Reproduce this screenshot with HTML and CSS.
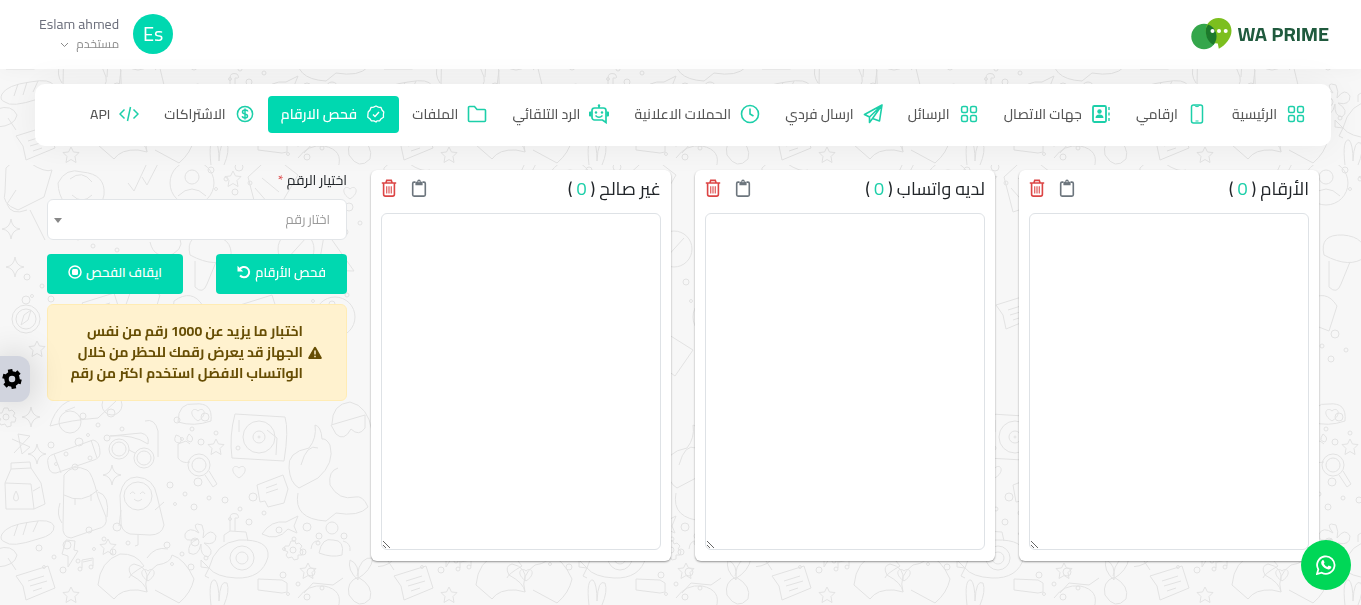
FILE: index.html
```html
<!DOCTYPE html>
<html lang="ar" dir="rtl">
<head>
  <meta charset="UTF-8" />
  <meta name="viewport" content="width=device-width, initial-scale=1.0"/>
  <title>WA PRIME - فحص الارقام</title>
  <link rel="stylesheet" href="styles.css">
</head>
<body>
  <!-- doodle wallpaper -->
  <svg class="wallpaper" aria-hidden="true">
    <defs>
      <path id="star" d="M0-8l2.5 5 5.5.5-4 4 1 6-5-3-5 3 1-6-4-4 5.500-.5z"/>
      <path id="spark" d="M0-10Q1-1 9 0 1 1 0 10-1 1-9 0-1-1 0-10z"/>
      <path id="heart" d="M0 6C-11-1-5-9 0-4 5-9 11-1 0 6z"/>
      <g id="dots">
        <circle cx="3" cy="5" r="3"/><circle cx="18" cy="14" r="2"/><circle cx="31" cy="2" r="4"/><circle cx="8" cy="24" r="1.500"/><circle cx="27" cy="27" r="3"/><circle cx="42" cy="18" r="2"/>
      </g>
      <g id="note"><path d="M0 8L32-2l7 22L10 32l-3-14zM12 13l16-5M14 18l17-5M17 23l9-3"/></g>
      <g id="gearline"><circle r="3"/><path d="M-2-9h4l1 3 3-1 3 3-2 3 3 2-1 4-4 0 0 4-4 1-2-3-4 1-2-3 2-3-4-2 1-4 4 0z"/></g>
      <pattern id="doodles" width="378" height="440" y="165" patternUnits="userSpaceOnUse">
        <!-- upper half -->
        <circle cx="192" cy="18" r="22"/><circle cx="192" cy="12" r="7"/><path d="M178 31q14-14 28 0"/>
        <path d="M58 18q8-16 24-11 24 2 22 23-4 19-24 15-21-3-22-27zM70 14q12-10 22 3M72 30q10 10 20 0"/>
        <path d="M6 3q8-10 24-5 15 10 22 7l-8 27-26 13q-17-6-13-18zM16 25l-9 14q4 12 20 6"/>
        <path d="M128 18l6 8 14-30M142 12l5 8 15-29"/>
        <path d="M248 12l24-22 26 20-17 29-24 8zM262 13l17 14M255 23l14 16"/>
        <use href="#star" x="233" y="14"/><use href="#heart" x="350" y="28"/><use href="#spark" x="11" y="64"/>
        <path d="M30 45l15 30M150 77q4 18 23 12 15-9 2-22M190 90q-5-21 19-20 24 2 22 22-15 12-41-2zM195 96v26q8 8 12-3l9-22"/>
        <circle cx="296" cy="84" r="18"/><path d="M287 94l19-21M325 65l-7 40 36 1z"/>
        <use href="#spark" x="15" y="102"/><circle cx="26" cy="154" r="14"/><circle cx="26" cy="154" r="10"/><circle cx="26" cy="135" r="4"/><path d="M21 160l3-10 7-5-3 10z"/>
        <use href="#note" x="82" y="130"/><path d="M135 114l25 16-11 37-27-16zM174 136q18-13 29 5l-8 25-23-9z"/>
        <use href="#star" x="37" y="184"/><use href="#note" x="240" y="132"/><circle cx="335" cy="152" r="20"/><circle cx="335" cy="152" r="8"/>
        <path d="M66 195l43 10M105 196q18-24 38-8 17-4 19 14l-54 3zM272 193l16-25 27 17-18 26z"/>
        <!-- lower half -->
        <use href="#gearline" x="6" y="252"/><use href="#spark" x="31" y="252"/>
        <path d="M50 261q8-28 34-28 21-6 32 3l-18 17q-27 2-48 8zM65 246l10-4"/><circle cx="70" cy="257" r="11"/><circle cx="112" cy="240" r="10"/>
        <path d="M12 274l18 8-8 7-4-20 12 2-16 17"/><use href="#spark" x="37" y="289"/>
        <path d="M48 299q-2-8 6-10l39-14q7 1 7 13 0 5-6 7l-38 13q-7 1-8-9zM54 289l7 19M91 275l6 18"/>
        <path d="M64 310q9-12 23-5 5 2 11 27l8 20q2 10-9 12l-26 9q-9-1-8-12zM64 330q18 10 34-5M60 338q-4 12 2 20M98 327q12 3 9 25M75 333v7M91 329v7"/>
        <path d="M5 318l6-14 20-1 10 15 4 21-11 5-28 0zM5 318l26 1 3 25M11 304v-6l19-1 1 6M16 326q-5 9 0 10 5-1 0-10M33 326l7-4"/>
        <circle cx="119" cy="284" r="10"/><circle cx="119" cy="284" r="7"/><circle cx="144" cy="293" r="10"/><circle cx="144" cy="293" r="7"/><path d="M110 271l31-3q9 2 7 11-15-10-38-8M145 256q10-3 13 10l0 26M129 285l6 3"/>
        <path d="M120 330q3-18 17-18 17 1 20 19l7 29q-2 10-14 10l-20-1q-10-3-9-14z"/><circle cx="138" cy="331" r="14"/><path d="M130 329q3-4 5 0M140 329q3-4 5 0M134 334q4 4 8 0M138 370v10l-3 1M155 345l9-8M121 345l-2 16"/>
        <use href="#spark" x="112" y="310"/>
        <path d="M178 293v-14l8-3 4 3M178 293q4 6 12 4"/><circle cx="199" cy="300" r="11"/><circle cx="199" cy="300" r="7"/><path d="M205 310l8 12 4-3-8-13M176 270q8 2 4 8-8 0-4-8M189 269q6 4 2 8-7-1-2-8"/>
        <path d="M178 257q0-20 17-18 18-2 16 17-17 6-33 1z"/><use href="#heart" x="198" y="250"/><use href="#star" x="216" y="282"/>
        <path d="M235 249l50 3q4 13-1 44l-52-3q-3-22 3-44zM239 255v12M267 265l10 8-1 17"/><circle cx="259" cy="272" r="16"/><circle cx="259" cy="272" r="6"/><circle cx="259" cy="272" r="1"/><circle cx="238" cy="283" r="2"/>
        <use href="#heart" x="239" y="307"/><path d="M257 320l26-10 5 14-4 14-16 4-3-6-5 1zM266 323l11-4M266 328l12-4"/>
        <path d="M289 303q-2-16 20-20 8-10 6-23 6 1 7 14 4-1 8 6 5 18-12 33l-19 10q-9-5-10-20zM301 300q6-22 17-17M298 328q-5 26 28 28l10-8q23 4 32-6-5-12-13-10-16 4-25-12M330 320q-2-14 8-17"/>
        <path d="M332 259q0-20 18-22 18 4 22 29M331 260l34-10 0 13q-6 9-14 1-7 13-15 5z"/>
        <path d="M199 368q-9-12 3-8 3 7 1 13 8-11 13-2 0 10-12 7 12 8 4 14-8-1-7-13-3 14-12 9-2-10 9-14-15 4-13-5 4-8 14-1z"/>
        <path d="M262 369q9-14 24-12l12-6-4 10 3 7-9-4q-11 13-26 5z"/>
        <path d="M2 369q5-9 28-12 21-4 24 4 1 9-16 13-27 9-33 3-6-2-3-8zM14 371l4-12M23 370l4-13M33 367l5-11"/>
        <path d="M66 375l9 1-1 9 4 1-10 16 0-11-6-2z"/><use href="#star" x="108" y="382"/>
        <path d="M-3 384q15-5 20 6-2 11-20 12M8 393l8 12"/><use href="#note" x="16" y="403"/>
        <path d="M82 403v-8l11-2v8M83 397l9-2"/><circle cx="80" cy="404" r="2"/><circle cx="91" cy="402" r="2"/>
        <path d="M98 420q2-24 22-31 16-1 24 12-14 8-15 12M98 420l16 14q7-10 24-9l9 2q-1-9-16-17-5-9 3-11 15 3 13 17M147 427q-5-17 10-27 14-2 15-10 13 4 22 24-3 14-15 24l-24-13M147 393q8-12 21-9"/><use href="#heart" x="148" y="410"/>
        <path d="M209 403q6-25 30-28 31-1 29 17-6 22-32 21-20-1-27-10zM224 377v-7l6-4 16 1 2 9M230 366v-13q0-6 7-4 4 5-2 4v13M209 403l-8-8 0 7 8 1-4 8 4 2"/><circle cx="242" cy="393" r="12"/><circle cx="242" cy="393" r="6"/>
        <use href="#gearline" x="293" y="385"/><circle cx="332" cy="363" r="6"/><circle cx="319" cy="371" r="3"/><circle cx="344" cy="371" r="3"/><path d="M319 388q3-16 14-13 12 0 9 15-10 3-23-2zM311 384q1-9 8-8M350 386q1-8-7-10"/>
        <use href="#star" x="308" y="406"/><use href="#star" x="71" y="430"/><path d="M258 414l24 1 5 3 0 9-5 1-24-3zM298 433q10-14 26-12 20 4 14 22M304 428l9-10 20 2 10-7"/>
        <path d="M350 395q10 4 8 20-11-10-8-20M357 411q3-20 16-18-2 13-16 21M358 412q-12 5-9 18 10 16 21 4 4-13-12-22zM211 440q-3-26 4-25 4 4 4 21 1-22 8-18 3 8-3 22"/>
        <use href="#dots" x="75" y="67"/><use href="#dots" x="24" y="107"/><use href="#dots" x="208" y="0"/><use href="#dots" x="305" y="112"/><use href="#dots" x="170" y="167"/><use href="#dots" x="48" y="275"/><use href="#dots" x="167" y="315"/><use href="#dots" x="222" y="330"/><use href="#dots" x="164" y="375"/><use href="#dots" x="86" y="360"/><use href="#dots" x="36" y="378"/><use href="#dots" x="276" y="360"/><use href="#dots" x="280" y="405"/><use href="#dots" x="104" y="42"/><use href="#dots" x="318" y="40"/><use href="#dots" x="80" y="246"/><use href="#dots" x="174" y="250"/>
      </pattern>
    </defs>
    <rect width="100%" height="100%" fill="url(#doodles)" stroke="none"/>
  </svg>

  <!-- shared icons -->
  <svg class="sprite" aria-hidden="true">
    <symbol id="i-grid" viewBox="-1 -1 20 20"><g fill="none" stroke="currentColor" stroke-width="1.500"><rect x="1.600" y="1.600" width="5.800" height="5.800" rx="1.500"/><rect x="10.600" y="1.600" width="5.800" height="5.800" rx="1.500"/><rect x="1.600" y="10.600" width="5.800" height="5.800" rx="1.500"/><rect x="10.600" y="10.600" width="5.800" height="5.800" rx="1.500"/></g></symbol>
    <symbol id="i-clipboard" viewBox="1 0 16 20"><path d="M5 3.500H3.500A1.500 1.500 0 0 0 2 5v12.500A1.500 1.500 0 0 0 3.500 19h11a1.500 1.500 0 0 0 1.500-1.500V5a1.500 1.500 0 0 0-1.500-1.500H13" fill="none" stroke="currentColor" stroke-width="1.800"/><path d="M5 3h2q0-2.500 2-2.500t2 2.500h2v4H5z" fill="currentColor"/><circle cx="9" cy="3" r=".7" fill="#fff"/></symbol>
    <symbol id="i-trash" viewBox="1 0 16 20"><path d="M1 4.500h16M5.500 4.500l1-3h5l1 3M3 5v12a2 2 0 0 0 2 2h8a2 2 0 0 0 2-2V5" fill="none" stroke="currentColor" stroke-width="1.800"/><path d="M6.500 8v8M9 8v8M11.500 8v8" stroke="currentColor" stroke-width="1.200"/></symbol>
  </svg>

  <header class="topbar">
    <a class="logo" href="#">
      <svg width="42" height="34" viewBox="0 0 42 34" aria-hidden="true">
        <circle cx="13" cy="19.500" r="12.700" fill="#34a64b"/>
        <path d="M27.500 1C20 1 14.800 6.500 14.800 13.800c0 7 5 12.500 12 12.800l1 5.200c7-3.500 12.700-11 12.700-18C40.500 6.500 35 1 27.500 1z" fill="#7cbf1e"/>
        <path d="M17 7.500a12.700 12.700 0 0 1 5.500 20.300C17.500 25.500 14.800 20 14.800 14q0-3.500 2.200-6.500z" fill="#1c7a2c"/>
        <g fill="#fff"><circle cx="21.500" cy="14" r="2"/><circle cx="28" cy="14" r="2"/><circle cx="34.700" cy="14" r="2"/></g>
      </svg>
      <span>WA PRIME</span>
    </a>
    <button class="user" type="button">
      <span class="avatar">Es</span>
      <span class="user-text">
        <span class="user-name">Eslam ahmed</span>
        <span class="user-role">مستخدم <svg width="9" height="6" viewBox="0 0 9 6" aria-hidden="true"><path d="M1 1l3.500 3.500L8 1" fill="none" stroke="currentColor"/></svg></span>
      </span>
    </button>
  </header>

  <nav class="menu">
    <a href="#"><svg><use href="#i-grid"/></svg>الرئيسية</a>
    <a href="#"><svg viewBox="0 0 20 20"><rect x="4.500" y="1" width="11" height="18" rx="2" fill="none" stroke="currentColor" stroke-width="1.500"/><path d="M7.500 1.200q.5 1.500 2.500 1.500t2.500-1.500M8.500 17h3" fill="none" stroke="currentColor"/></svg>ارقامي</a>
    <a href="#"><svg viewBox="0 0 20 20"><rect x="2" y="2" width="13" height="16" rx="1.200" fill="none" stroke="currentColor" stroke-width="1.800"/><circle cx="8.500" cy="7.500" r="2.200" fill="currentColor"/><path d="M4.500 14q0-3.500 4-3.500t4 3.500z" fill="currentColor"/><path d="M18 3v3M18 8.500v3M18 14v3" stroke="currentColor" stroke-width="1.400"/></svg>جهات الاتصال</a>
    <a href="#"><svg><use href="#i-grid"/></svg>الرسائل</a>
    <a href="#"><svg viewBox="0 0 20 20"><path d="M19 1L1.500 10.500l5 2.500zM19 1L6.500 13v5.500l3-4zM19 1l-2.500 16-7-2.500" fill="none" stroke="currentColor" stroke-width="1.600" stroke-linejoin="round"/></svg>ارسال فردي</a>
    <a href="#"><svg viewBox="0 0 20 20"><circle cx="10" cy="10" r="8.500" fill="none" stroke="currentColor" stroke-width="1.600"/><path d="M10 4.500V10l3.500 2" fill="none" stroke="currentColor" stroke-width="1.600"/></svg>الحملات الاعلانية</a>
    <a href="#"><svg viewBox="0 0 20 20"><path d="M5.500 4h9a2.500 2.500 0 0 1 2.500 2.500v12L13.500 16h-8A2.500 2.500 0 0 1 3 13.500v-7A2.500 2.500 0 0 1 5.500 4zM10 4V1.500" fill="none" stroke="currentColor" stroke-width="1.700"/><path d="M0 8.500q0-1 1-1h1.500v5H1q-1 0-1-1zM20 8.500q0-1-1-1h-1.500v5H19q1 0 1-1z" fill="currentColor"/><circle cx="10" cy="1.500" r="1.200" fill="currentColor"/><circle cx="7" cy="8.500" r="1.200" fill="currentColor"/><circle cx="13" cy="8.500" r="1.200" fill="currentColor"/><path d="M6.500 11.500q3.500 3.500 7 0" fill="none" stroke="currentColor" stroke-width="1.500"/></svg>الرد التلقائي</a>
    <a href="#"><svg viewBox="0 0 20 20"><path d="M1.500 3.500a1 1 0 0 1 1-1h5l2.500 3h7.500a1 1 0 0 1 1 1v10a1 1 0 0 1-1 1h-15a1 1 0 0 1-1-1z" fill="none" stroke="currentColor" stroke-width="1.600"/></svg>الملفات</a>
    <a href="#" class="active"><svg viewBox="0 0 20 20"><path d="M10 2l2.400 1.200L15 3.500l1 2.500 1.800 2-.4 2.500.1 2.700-2.300 1.500-1.600 2.200-2.600 0L10 18l-2-1.100-2.600 0-1.600-2.200-2-1.500.1-2.700L2.200 8 4 6l1-2.500 2.600-.3z" fill="none" stroke="currentColor" stroke-width="1.300" stroke-linejoin="round"/><path d="M7 10.500l2 2 4-4.500" fill="none" stroke="currentColor" stroke-width="1.400"/></svg>فحص الارقام</a>
    <a href="#"><svg viewBox="0 0 20 20"><circle cx="10" cy="10" r="7.600" fill="none" stroke="currentColor" stroke-width="1.500"/><path d="M12.700 7.500Q12.500 6 10 6T7.500 8q0 1.500 2.500 2t2.500 2q0 2-2.500 2t-2.700-1.800M10 4.500v11" fill="none" stroke="currentColor" stroke-width="1.500"/></svg>الاشتراكات</a>
    <a href="#"><svg viewBox="0 0 20 20"><path d="M5.500 5.500L1 10l4.500 4.500M14.500 5.500L19 10l-4.500 4.500M11.500 3l-3 14" fill="none" stroke="currentColor" stroke-width="1.500"/></svg>API</a>
  </nav>

  <main class="content">
    <section class="card">
      <div class="card-head">
        <label for="numbers">الأرقام ( <span class="count">0</span> )</label>
        <button type="button" class="copy" aria-label="نسخ"><svg><use href="#i-clipboard"/></svg></button>
        <button type="button" class="delete" aria-label="حذف"><svg><use href="#i-trash"/></svg></button>
      </div>
      <textarea id="numbers"></textarea>
    </section>
    <section class="card">
      <div class="card-head">
        <label for="valid">لديه واتساب ( <span class="count">0</span> )</label>
        <button type="button" class="copy" aria-label="نسخ"><svg><use href="#i-clipboard"/></svg></button>
        <button type="button" class="delete" aria-label="حذف"><svg><use href="#i-trash"/></svg></button>
      </div>
      <textarea id="valid"></textarea>
    </section>
    <section class="card">
      <div class="card-head">
        <label for="invalid">غير صالح ( <span class="count">0</span> )</label>
        <button type="button" class="copy" aria-label="نسخ"><svg><use href="#i-clipboard"/></svg></button>
        <button type="button" class="delete" aria-label="حذف"><svg><use href="#i-trash"/></svg></button>
      </div>
      <textarea id="invalid"></textarea>
    </section>

    <form class="panel">
      <label for="device">اختيار الرقم <span class="required">*</span></label>
      <div class="select-box">
        <select id="device">
          <option>اختار رقم</option>
        </select>
      </div>
      <div class="actions">
        <button type="button">فحص الأرقام
          <svg viewBox="0 0 14 14" aria-hidden="true"><path d="M2.500 4.500A5.200 5.200 0 1 1 3 10.500" fill="none" stroke="currentColor" stroke-width="2"/><path d="M.5.800V6.500h5.700z" fill="currentColor"/></svg>
        </button>
        <button type="button">ايقاف الفحص
          <svg viewBox="0 0 14 14" aria-hidden="true"><circle cx="7" cy="7" r="6" fill="none" stroke="currentColor" stroke-width="1.500"/><rect x="4" y="4" width="6" height="6" rx="1.500" fill="currentColor"/></svg>
        </button>
      </div>
      <div class="alert">
        <svg viewBox="0 0 14 14" aria-hidden="true"><path d="M6.100 1.300a1 1 0 0 1 1.800 0l5.800 10.200a1 1 0 0 1-.9 1.500H1.200a1 1 0 0 1-.9-1.500z" fill="currentColor"/><path d="M7 4.500v4M7 9.700v1.600" stroke="#fff2cf" stroke-width="1.500"/></svg>
        <p>اختبار ما يزيد عن 1000 رقم من نفس<br>الجهاز قد يعرض رقمك للحظر من خلال<br>الواتساب الافضل استخدم اكتر من رقم</p>
      </div>
    </form>
  </main>

  <button type="button" class="settings" aria-label="الإعدادات">
    <svg width="20" height="20" viewBox="0 0 20 20"><circle cx="10" cy="10" r="5.500" fill="none" stroke="currentColor" stroke-width="4.500"/><g stroke="currentColor" stroke-width="4.600"><path d="M8 .4l.8 4M.8 7l4 1M3 17l3-3M12 19.600l-.8-4M19.200 13l-4-1M17 3l-3 3"/></g></svg>
  </button>
  <a class="whatsapp" href="#" aria-label="WhatsApp">
    <svg width="20" height="20" viewBox="0 0 20 20"><path d="M1 19l1.300-4.600A8.700 8.700 0 1 1 5.700 17.700z" fill="none" stroke="currentColor" stroke-width="1.800"/><path d="M6.300 5.300q.7-.7 1.300 0l.9 2q.2.500-.7 1.400 1.300 2.400 3.600 3.300l1-1.200q.3-.4.800-.1l1.900.9q.4.300.1 1.100-.8 1.900-2.900 1.700-4.500-.7-6.900-5.100-.9-2.400.9-4z" fill="currentColor"/></svg>
  </a>
</body>
</html>
```
FILE: styles.css
```css
* {
  box-sizing: border-box;
}

body {
  margin: 0;
  min-height: 100vh;
  font-family: "Cairo", "Open Sans", "DejaVu Sans", sans-serif;
  font-size: 14px;
  background-color: #f7f7f7;
  color: #212529;
}

button, select, textarea {
  font-family: inherit;
}

a {
  text-decoration: none;
}

.wallpaper {
  position: fixed;
  top: 0;
  left: 0;
  z-index: -1;
  width: 100%;
  height: 100%;
  fill: none;
  stroke: #e2e2e2;
  stroke-width: 1;
}

.sprite {
  display: none;
}

.topbar {
  display: flex;
  justify-content: space-between;
  align-items: center;
  height: 69px;
  padding: 0 32px 2px 39px;
  background: white;
  box-shadow: 0 0 20px rgba(0, 0, 0, 0.04);
}

.logo {
  display: flex;
  align-items: center;
  gap: 4px;
  direction: ltr;
  color: #205a3e;
  font-size: 20px;
  font-weight: bold;
}

.user {
  display: flex;
  align-items: center;
  gap: 14px;
  padding: 0;
  border: none;
  background: none;
  color: #6c6f7c;
  cursor: pointer;
}

.avatar {
  width: 40px;
  height: 40px;
  line-height: 40px;
  border-radius: 50%;
  background: #00d8b0;
  color: white;
  font-size: 20px;
}

.user-text {
  display: flex;
  flex-direction: column;
  align-items: flex-start;
}

.user-name {
  font-size: 14px;
  line-height: 20px;
}

.user-role {
  color: #8a8a8a;
  font-size: 12px;
  line-height: 20px;
}

.user-role svg {
  margin-right: 5px;
}

.menu {
  display: flex;
  justify-content: space-between;
  align-items: center;
  min-height: 62px;
  margin: 15px 30px 24px 35px;
  padding: 0 13px 2px 43px;
  border-radius: 10px;
  background: white;
  box-shadow: 0 0 35px rgba(0, 0, 0, 0.06);
}

.menu a {
  display: flex;
  align-items: center;
  gap: 9px;
  height: 37px;
  padding: 0 12px;
  border-radius: 4px;
  color: #555;
  font-size: 14px;
  font-weight: 500;
  white-space: nowrap;
}

.menu svg {
  width: 20px;
  height: 20px;
  color: #1ccfa9;
}

.menu .active {
  padding: 0 13px;
  background: #00d8b0;
  color: white;
  font-weight: 600;
}

.menu .active svg {
  color: white;
}

.content {
  display: grid;
  grid-template-columns: repeat(4, minmax(0, 1fr));
  align-items: start;
  gap: 24px;
  padding: 0 42px 24px 47px;
}

.card {
  padding: 0 10px 11px;
  border-radius: 6px;
  background: white;
  box-shadow: 0 1px 2px rgba(0, 0, 0, 0.4);
}

.card-head {
  display: flex;
  align-items: center;
  gap: 14px;
  height: 43px;
  padding-bottom: 7px;
}

.card-head label {
  margin-left: auto;
  font-size: 18px;
}

.count {
  color: #1ccfa9;
}

.card-head button {
  padding: 0;
  border: none;
  background: none;
  cursor: pointer;
}

.card-head svg {
  display: block;
  width: 16px;
  height: 18px;
}

.copy {
  color: #6c757d;
}

.delete {
  color: #dc4545;
}

textarea {
  display: block;
  width: 100%;
  height: 337px;
  padding: 8px 12px;
  border: 1px solid #dee2e6;
  border-radius: 6px;
  background: white;
  resize: vertical;
}

.panel label {
  display: block;
  height: 29px;
  line-height: 20px;
  font-size: 14px;
}

.required {
  color: #dc4545;
}

.select-box {
  position: relative;
}

.select-box::after {
  content: "";
  position: absolute;
  left: 7px;
  top: 19px;
  border: 4px solid transparent;
  border-top: 5px solid #888;
  pointer-events: none;
}

select {
  display: block;
  width: 100%;
  height: 41px;
  padding: 0 16px 2px;
  border: 1px solid #e2e5e8;
  border-radius: 6px;
  appearance: none;
  background: white;
  color: #999;
  font-size: 13px;
}

.actions {
  display: flex;
  justify-content: space-between;
  margin: 14px 0 10px;
}

.actions button {
  display: flex;
  align-items: center;
  gap: 4px;
  height: 40px;
  padding: 0 21px 4px;
  border: none;
  border-radius: 4px;
  background: #00d8b0;
  color: white;
  font-size: 13px;
  font-weight: 600;
  cursor: pointer;
}

.actions svg, .alert svg {
  flex: none;
  width: 14px;
  height: 14px;
}

.alert {
  display: flex;
  align-items: center;
  gap: 5px;
  padding: 16px 24px 16px 16px;
  border: 1px solid #ffecb5;
  border-radius: 6px;
  background: #fff2cf;
  color: #664d03;
}

.alert p {
  margin: 0;
  font-size: 14px;
  font-weight: bold;
  line-height: 21px;
  white-space: nowrap;
}

.settings {
  position: fixed;
  left: 0;
  top: 356px;
  display: flex;
  align-items: center;
  justify-content: flex-end;
  width: 30px;
  height: 46px;
  padding: 0 0 0 2px;
  direction: ltr;
  border: none;
  border-radius: 0 12px 12px 0;
  background: #d1d4de;
  color: black;
  box-shadow: 0 0 35px rgba(0, 0, 0, 0.2);
}

.settings svg {
  margin-right: 8px;
}

.whatsapp {
  position: fixed;
  right: 10px;
  bottom: 15px;
  display: flex;
  align-items: center;
  justify-content: center;
  width: 50px;
  height: 50px;
  border-radius: 50%;
  background: #00d757;
  color: white;
}
```
